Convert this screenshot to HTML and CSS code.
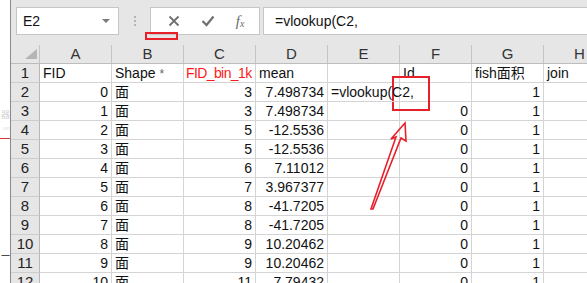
FILE: index.html
```html
<!DOCTYPE html>
<html lang="zh-CN">
<head>
    <meta charset="UTF-8">
    <title>vlookup</title>
    <link rel="stylesheet" href="styles.css">
</head>
<body>
<div class="screen">

    <!-- 左侧露出的网页 -->
    <div class="desk">
        <div class="ghost">器</div>
        <div class="ghost small">on</div>
        <div class="redline"></div>
        <div class="dash">一</div>
    </div>

    <div class="excel">
        <!-- 编辑栏 -->
        <div class="fbar">
            <div class="namebox">
                <span>E2</span>
                <svg class="caret" width="8" height="5" viewBox="0 0 8 5"><path d="M0 0h8L4 4z" fill="#7a7a7a"/></svg>
            </div>
            <div class="grip"><i></i><i></i><i></i></div>
            <div class="fbtns">
                <svg width="12" height="12" viewBox="0 0 12 12"><path d="M1.5 1.5l9 9M10.5 1.5l-9 9" stroke="#707070" stroke-width="1.8"/></svg>
                <svg width="14" height="12" viewBox="0 0 14 12"><path d="M1.5 6l4 4 7-8.5" stroke="#707070" stroke-width="2.2" fill="none"/></svg>
                <span class="fx">f<sub>x</sub></span>
            </div>
            <div class="finput">=vlookup(C2,</div>
        </div>

        <!-- 表格 -->
        <div class="sheet">
            <div class="hd corner"><svg width="12" height="10" viewBox="0 0 12 10"><path d="M12 0v10H0z" fill="#b5b5b5"/></svg></div>
            <div class="hd">A</div><div class="hd">B</div><div class="hd">C</div><div class="hd">D</div>
            <div class="hd">E</div><div class="hd">F</div><div class="hd">G</div><div class="hd">H</div>

            <div class="rh">1</div><div class="c">FID</div><div class="c">Shape <small>*</small></div><div class="c red">FID_bin_1k</div><div class="c">mean</div><div class="c"></div><div class="c">Id</div><div class="c">fish面积</div><div class="c">join</div>
            <div class="rh">2</div><div class="c n">0</div><div class="c">面</div><div class="c n">3</div><div class="c n">7.498734</div><div class="c spill">=vlookup(C2,</div><div class="c"></div><div class="c n">1</div><div class="c"></div>
            <div class="rh">3</div><div class="c n">1</div><div class="c">面</div><div class="c n">3</div><div class="c n">7.498734</div><div class="c"></div><div class="c n">0</div><div class="c n">1</div><div class="c"></div>
            <div class="rh">4</div><div class="c n">2</div><div class="c">面</div><div class="c n">5</div><div class="c n">-12.5536</div><div class="c"></div><div class="c n">0</div><div class="c n">1</div><div class="c"></div>
            <div class="rh">5</div><div class="c n">3</div><div class="c">面</div><div class="c n">5</div><div class="c n">-12.5536</div><div class="c"></div><div class="c n">0</div><div class="c n">1</div><div class="c"></div>
            <div class="rh">6</div><div class="c n">4</div><div class="c">面</div><div class="c n">6</div><div class="c n">7.11012</div><div class="c"></div><div class="c n">0</div><div class="c n">1</div><div class="c"></div>
            <div class="rh">7</div><div class="c n">5</div><div class="c">面</div><div class="c n">7</div><div class="c n">3.967377</div><div class="c"></div><div class="c n">0</div><div class="c n">1</div><div class="c"></div>
            <div class="rh">8</div><div class="c n">6</div><div class="c">面</div><div class="c n">8</div><div class="c n">-41.7205</div><div class="c"></div><div class="c n">0</div><div class="c n">1</div><div class="c"></div>
            <div class="rh">9</div><div class="c n">7</div><div class="c">面</div><div class="c n">8</div><div class="c n">-41.7205</div><div class="c"></div><div class="c n">0</div><div class="c n">1</div><div class="c"></div>
            <div class="rh">10</div><div class="c n">8</div><div class="c">面</div><div class="c n">9</div><div class="c n">10.20462</div><div class="c"></div><div class="c n">0</div><div class="c n">1</div><div class="c"></div>
            <div class="rh">11</div><div class="c n">9</div><div class="c">面</div><div class="c n">9</div><div class="c n">10.20462</div><div class="c"></div><div class="c n">0</div><div class="c n">1</div><div class="c"></div>
            <div class="rh">12</div><div class="c n">10</div><div class="c">面</div><div class="c n">11</div><div class="c n">7.79432</div><div class="c"></div><div class="c n">0</div><div class="c n">1</div><div class="c"></div>
        </div>
    </div>

    <!-- 红色标注 -->
    <svg class="marks" width="587" height="283" viewBox="0 0 587 283">
        <rect x="146" y="33" width="31" height="6" fill="none" stroke="#e8202a" stroke-width="2"/>
        <rect x="393" y="77" width="36" height="33" fill="none" stroke="#e8202a" stroke-width="2"/>
        <polygon points="405,123 391,139 396,137 371,209 373,209 401,138 406,141" fill="none" stroke="#e8202a" stroke-width="1.6" stroke-linejoin="miter"/>
    </svg>
</div>
</body>
</html>
```

FILE: styles.css
```css
body {
    margin: 0;
    padding: 0;
    font-family: "Liberation Sans", "Noto Sans CJK SC", sans-serif;
    background-color: #fff;
    color: #111;
}

.screen {
    position: relative;
    display: flex;
    width: 587px;
    height: 283px;
    overflow: hidden;
}

/* 左边露出来的一条网页 */
.desk {
    width: 10px;
    flex: none;
    border-right: 1px solid #8a8a8a;
    display: flex;
    flex-direction: column;
    align-items: flex-end;
    overflow: hidden;
    background: #fff;
}

.ghost {
    margin-top: 108px;
    font-size: 9px;
    line-height: 14px;
    color: #cfcfcf;
}

.ghost.small {
    margin-top: 2px;
    font-size: 6px;
    line-height: 8px;
    color: #e0e0e0;
}

.redline {
    align-self: stretch;
    height: 1px;
    margin-top: 6px;
    background: #d43a3a;
}

.dash {
    margin-top: 110px;
    font-size: 9px;
    line-height: 14px;
    color: #222;
}

.excel {
    flex: 1;
    min-width: 0;
    background: #e6e6e6;
}

/* 编辑栏 */
.fbar {
    height: 45px;
    box-sizing: border-box;
    padding: 7px 0 0 5px;
    display: flex;
    align-items: flex-start;
}

.namebox {
    width: 103px;
    height: 28px;
    box-sizing: border-box;
    background: #fff;
    border: 1px solid #c6c6c6;
    display: flex;
    align-items: center;
    justify-content: space-between;
    padding: 0 8px 0 6px;
    font-size: 14px;
}

.grip {
    width: 31px;
    height: 28px;
    display: flex;
    flex-direction: column;
    align-items: center;
    justify-content: center;
    gap: 2px;
}

.grip i {
    width: 2px;
    height: 2px;
    background: #b4b4b4;
}

.fbtns {
    width: 110px;
    height: 28px;
    box-sizing: border-box;
    background: #fff;
    border: 1px solid #c6c6c6;
    display: flex;
    align-items: center;
    justify-content: space-around;
    padding: 0 4px 0 6px;
}

.fx {
    font-family: "Liberation Serif", serif;
    font-style: italic;
    font-size: 15px;
    color: #6a6a6a;
}

.fx sub {
    font-size: 10px;
    vertical-align: -1px;
}

.finput {
    flex: 1;
    margin-left: 3px;
    height: 28px;
    box-sizing: border-box;
    background: #fff;
    border: 1px solid #c6c6c6;
    border-right: none;
    padding-left: 11px;
    font-size: 14px;
    line-height: 26px;
    white-space: nowrap;
}

/* 表格 */
.sheet {
    display: grid;
    grid-template-columns: 29px repeat(8, 72px);
    grid-auto-rows: 19px;
    background: #fff;
}

.sheet > div {
    box-sizing: border-box;
    border-right: 1px solid #d4d4d4;
    border-bottom: 1px solid #d4d4d4;
    font-size: 14px;
    line-height: 18px;
    white-space: nowrap;
    overflow: hidden;
}

.sheet .hd {
    background: #e6e6e6;
    text-align: center;
    color: #333;
    border-right-color: #c4c4c4;
    border-bottom-color: #bdbdbd;
    font-size: 15px;
}

.sheet .corner {
    display: flex;
    align-items: flex-end;
    justify-content: flex-end;
    padding: 0 2px 4px 0;
}

.sheet .rh {
    background: #e6e6e6;
    text-align: center;
    color: #222;
    border-right-color: #b8b8b8;
    border-bottom-color: #cdcdcd;
    font-size: 15px;
}

.c {
    padding: 0 3px;
}

.c.n {
    text-align: right;
}

.c.red {
    color: #ff1a1a;
    padding: 0 1px 0 2px;
    letter-spacing: -0.6px;
}

.c small {
    font-size: 12px;
    color: #666;
}

.sheet .spill {
    overflow: visible;
    position: relative;
    z-index: 1;
}

.marks {
    position: absolute;
    left: 0;
    top: 0;
    pointer-events: none;
}
```
